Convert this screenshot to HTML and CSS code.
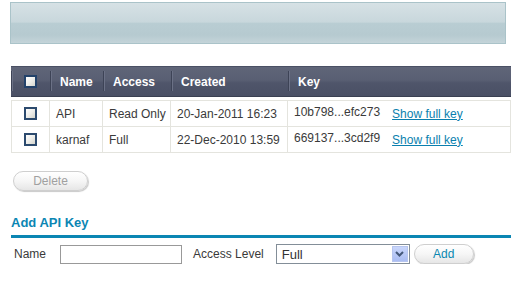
FILE: index.html
```html
<!DOCTYPE html>
<html>
<head>
<meta charset="utf-8">
<link rel="stylesheet" href="styles.css">
</head>
<body>
<div class="banner"></div>

<table class="keys">
  <colgroup>
    <col class="w-check"><col class="w-name"><col class="w-access"><col class="w-created"><col class="w-key">
  </colgroup>
  <thead>
    <tr>
      <th class="c-check"><span class="cb"></span></th>
      <th>Name</th>
      <th>Access</th>
      <th>Created</th>
      <th>Key</th>
    </tr>
  </thead>
  <tbody class="spacer"><tr><td colspan="5"></td></tr></tbody>
  <tbody class="rows">
    <tr>
      <td class="c-check"><span class="cb"></span></td>
      <td>API</td>
      <td>Read Only</td>
      <td>20-Jan-2011 16:23</td>
      <td><span class="key">10b798...efc273</span><a class="show" href="#">Show full key</a></td>
    </tr>
    <tr>
      <td class="c-check"><span class="cb"></span></td>
      <td>karnaf</td>
      <td>Full</td>
      <td>22-Dec-2010 13:59</td>
      <td><span class="key">669137...3cd2f9</span><a class="show" href="#">Show full key</a></td>
    </tr>
  </tbody>
</table>

<div class="actions">
  <button class="pill delete" type="button">Delete</button>
</div>

<h2 class="section">Add API Key</h2>

<div class="add-form">
  <label class="lbl">Name</label>
  <input class="name-input" type="text">
  <label class="lbl lbl-access">Access Level</label>
  <div class="select">
    <span class="select-val">Full</span>
    <span class="select-btn">
      <svg width="9" height="6" viewBox="0 0 9 6"><path d="M1 1 L4.5 4.5 L8 1" fill="none" stroke="#44587a" stroke-width="2"/></svg>
    </span>
  </div>
  <button class="pill add" type="button">Add</button>
</div>
</body>
</html>
```

FILE: styles.css
```css
* { box-sizing: border-box; }
body {
  margin: 0;
  padding: 2px 10px 0 10px;
  font-family: "Liberation Sans", Arial, sans-serif;
  font-size: 12px;
  color: #333;
  background: #fff;
}
.banner {
  width: 496px;
  height: 42px;
  border: 1px solid #aac3c9;
  background: linear-gradient(#d6e1e5 0%, #c8d7dc 48%, #b9cdd3 50%, #b6cad0 80%, #c4d4d9 100%);
}
.keys {
  margin: 22px 0 0 1px;
  width: 500px;
  border-collapse: separate;
  border-spacing: 0;
  table-layout: fixed;
}
.w-check { width: 39px; }
.w-name { width: 53px; }
.w-access { width: 68px; }
.w-created { width: 117px; }
.w-key { width: 223px; }

.keys thead th {
  height: 31px;
  padding: 0 0 0 10px;
  text-align: left;
  color: #fff;
  font-weight: bold;
  font-size: 12px;
  position: relative;
  background: linear-gradient(#5f6578 0%, #595f73 45%, #4f556a 55%, #4a5065 100%);
  border-bottom: 1px solid #3a4052;
  border-top: 1px solid #4a5064;
}
.keys thead th::before {
  content: "";
  position: absolute;
  left: 0;
  top: 4px;
  bottom: 5px;
  width: 1px;
  background: #3d4356;
  box-shadow: 1px 0 0 #6b7186;
}
.keys thead th.c-check { padding: 0; text-align: center; }
.spacer td { height: 3px; padding: 0; }

.rows td {
  height: 26px;
  padding: 0 0 0 6px;
  border-right: 1px solid #e4e4de;
  border-bottom: 1px solid #e4e4de;
  white-space: nowrap;
  color: #3a3a3a;
}
.rows td:first-child { border-left: 1px solid #e4e4de; }
.rows tr:first-child td { border-top: 1px solid #e4e4de; height: 27px; }
.rows td.c-check { padding: 0; text-align: center; }

.cb {
  display: inline-block;
  width: 13px;
  height: 13px;
  border: 2px solid #2c4a6e;
  background: linear-gradient(135deg, #ffffff 0%, #eeeeea 50%, #d4d4cc 100%);
  vertical-align: middle;
  position: relative;
  top: -1px;
}
.keys thead .cb { width: 13px; height: 13px; border-color: #23426a; }

.key { display: inline-block; position: relative; top: -2px; }
.show {
  margin-left: 12px;
  color: #0a7fae;
  text-decoration: underline;
}

.actions { padding: 18px 0 0 3px; }
.pill {
  font-family: "Liberation Sans", Arial, sans-serif;
  font-size: 12px;
  height: 20px;
  border: 1px solid #cfcfcf;
  border-radius: 10px;
  background: linear-gradient(#ffffff 0%, #f6f6f6 50%, #e6e6e6 100%);
  box-shadow: 1px 1px 1px #c9c9c9;
  padding: 0;
  cursor: pointer;
}
.delete { width: 75px; color: #a0a0a0; }

.section {
  margin: 24px 0 0 1px;
  width: 500px;
  padding: 0 0 4px 0;
  font-size: 13px;
  font-weight: bold;
  color: #0b86b3;
  border-bottom: 3px solid #0b86b3;
  line-height: 16px;
}

.add-form {
  display: flex;
  align-items: center;
  padding: 6px 0 0 4px;
}
.lbl { color: #3a3a3a; }
.name-input {
  margin-left: 14px;
  width: 122px;
  height: 19px;
  border: 1px solid #999;
  padding: 0;
}
.lbl-access { margin-left: 11px; }
.select {
  margin-left: 12px;
  width: 134px;
  height: 20px;
  border: 1px solid #838e98;
  display: flex;
  align-items: center;
  justify-content: space-between;
  padding: 0 1px 0 5px;
  background: #fff;
}
.select-val { font-size: 13px; color: #333; }
.select-btn {
  width: 16px;
  height: 16px;
  background: linear-gradient(#c9d6fb, #aabdf3);
  border: 1px solid #b6c5ef;
  display: flex;
  align-items: center;
  justify-content: center;
}
.add {
  margin-left: 4px;
  width: 60px;
  color: #0a87b0;
}
```
